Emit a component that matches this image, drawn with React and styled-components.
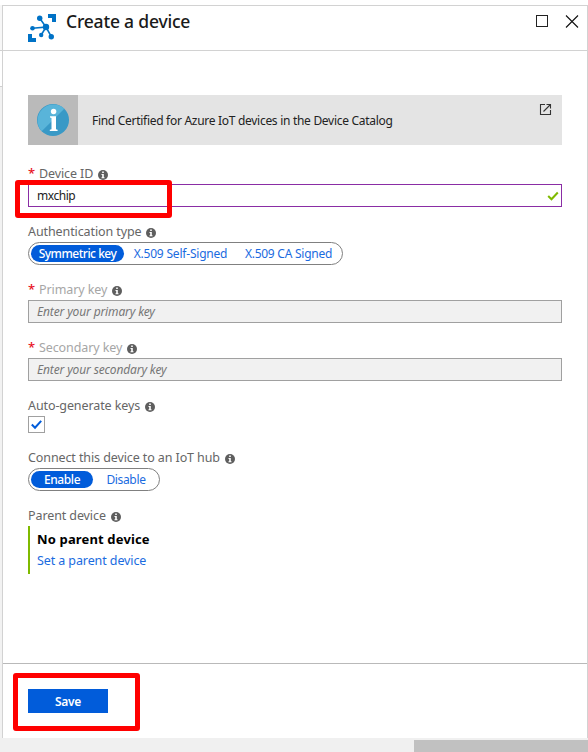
import React from "react";
import styled, { createGlobalStyle } from "styled-components";

const Global = createGlobalStyle`
  * { box-sizing: border-box; }
  body { margin: 0; background: #fff; font-family: "Noto Sans", "Open Sans", sans-serif; overflow: hidden; }
`;

const Page = styled.div`
  width: 588px;
  height: 752px;
  padding-top: 5px;
  display: grid;
  grid-template-columns: 2px 586px;
  grid-template-rows: 733px 14px;
  background: #fff;
`;
const Behind = styled.div`
  display: flex;
  flex-direction: column;
  background: #f2f2f2;
`;
const BehindRow = styled.div`
  height: ${(p) => p.$h}px;
  background: ${(p) => p.$bg};
  border-bottom: 1px solid #d0d0d0;
`;
const Blade = styled.section`
  display: flex;
  flex-direction: column;
  background: #fff;
  border: 1px solid #d2d2d2;
  border-bottom: 0;
`;
const Header = styled.header`
  height: 45px;
  display: flex;
  align-items: flex-start;
  border-bottom: 1px solid #d2d2d2;
  padding: 8px 8px 0 25px;
`;
const Title = styled.h1`
  margin: -5px auto 0 10px;
  font-size: 17.5px;
  font-weight: 500;
  line-height: 24px;
  letter-spacing: -0.2px;
  color: #1a1a1a;
  white-space: nowrap;
`;
const WindowIcon = styled.svg`
  display: block;
  margin: 1px 0 0 ${(p) => p.$gap || 0}px;
`;
const Body = styled.main`
  flex: 1;
  padding: 44px 25px 0;
`;
const Banner = styled.div`
  height: 50px;
  display: flex;
  align-items: center;
  background: #e4e4e4;
  margin-bottom: 20px;
`;
const BannerIcon = styled.div`
  width: 50px;
  height: 50px;
  display: grid;
  place-items: center;
  background: #bababa;
`;
const BannerText = styled.span`
  margin: 1px auto 0 14px;
  font-size: 12px;
  letter-spacing: -0.29px;
  color: #222;
  white-space: nowrap;
`;
const LinkIcon = styled.svg`
  align-self: flex-start;
  margin: 8px 10px 0 0;
`;
const Field = styled.div`
  position: relative;
  margin-bottom: 16px;
`;
const Label = styled.div`
  height: 19px;
  display: flex;
  align-items: flex-start;
  line-height: 17px;
  font-size: 12.5px;
  letter-spacing: -0.1px;
  color: ${(p) => (p.$muted ? "#a6a6a6" : "#666")};
  white-space: nowrap;
`;
const Star = styled.span`
  width: 11px;
  color: #e81123;
  font-size: 13px;
  font-weight: 500;
  letter-spacing: 0;
`;
const InfoSvg = styled.svg`
  margin: 5px 0 0 5px;
`;
const Input = styled.div`
  height: 23px;
  display: flex;
  align-items: center;
  justify-content: space-between;
  padding: 0 2px 0 8px;
  border: 1px solid ${(p) => (p.$disabled ? "#a0a0a0" : "#8a2da5")};
  background: ${(p) => (p.$disabled ? "#f1f1f1" : "#fff")};
  font-size: 12px;
  font-style: ${(p) => (p.$disabled ? "italic" : "normal")};
  letter-spacing: ${(p) => (p.$disabled ? -0.14 : -0.45)}px;
  color: ${(p) => (p.$disabled ? "#777" : "#222")};
`;
const Pills = styled.div`
  width: ${(p) => p.$w}px;
  height: 23px;
  display: flex;
  padding: 2px;
  border: 1px solid #808080;
  border-radius: 12px;
`;
const Pill = styled.div`
  flex: none;
  width: ${(p) => p.$w}px;
  height: 17px;
  border-radius: 9px;
  background: ${(p) => (p.$on ? "#015cda" : "transparent")};
  color: ${(p) => (p.$on ? "#fff" : "#1a6be0")};
  font-size: 12px;
  font-weight: ${(p) => (p.$on ? 500 : 400)};
  line-height: 18px;
  letter-spacing: ${(p) => p.$ls || 0}px;
  text-align: center;
  white-space: nowrap;
`;
const Checkbox = styled.div`
  width: 17px;
  height: 17px;
  display: grid;
  place-items: center;
  border: 1px solid #a0a0a0;
`;
const Parent = styled.div`
  height: 48px;
  border-left: 2px solid #7fba00;
  padding: 3px 0 0 7px;
  line-height: 21px;
`;
const ParentName = styled.div`
  font-size: 13px;
  font-weight: 700;
  color: #000;
  letter-spacing: 0.15px;
`;
const ParentLink = styled.a`
  display: block;
  font-size: 12.5px;
  color: #1a6be0;
  letter-spacing: -0.1px;
`;
const Footer = styled.footer`
  height: 75px;
  border-top: 1px solid #b9b9b9;
  padding: 25px 25px 0;
  position: relative;
`;
const Save = styled.button`
  display: block;
  width: 80px;
  height: 24px;
  padding: 1px 0 0;
  border: 0;
  background: #015cda;
  color: #fff;
  font: 600 12px/23px "Noto Sans", sans-serif;
  letter-spacing: -0.3px;
`;
const Highlight = styled.div`
  position: absolute;
  left: ${(p) => p.$x}px;
  top: ${(p) => p.$y}px;
  width: ${(p) => p.$w}px;
  height: ${(p) => p.$h}px;
  border: 5px solid #f00;
  border-radius: 3px;
`;
const ScrollTrack = styled.div`
  grid-column: 1 / 3;
  padding: 2px 0 0 414px;
  background: #f0f0f0;
`;
const ScrollThumb = styled.div`
  height: 12px;
  background: #c1c1c1;
`;

const Info = () => (
  <InfoSvg width="10" height="10" viewBox="0 0 10 10">
    <circle cx="5" cy="5" r="5" fill="#5e5e5e" />
    <path d="M4.200 1.500h1.600v1.500H4.200zM3.500 4H5.800v3.300h.7v1H3.500v-1h.7V5h-.7z" fill="#fff" />
  </InfoSvg>
);

const HubIcon = () => (
  <svg width="28" height="28" viewBox="0 0 28 28">
    <g fill="#0072c6">
      <path d="M20 0h8v8h-4V4h-4zM0 20h4v4h4v4H0z" />
      <circle cx="11.7" cy="4.2" r="2.7" />
      <circle cx="4.5" cy="14.3" r="2.3" />
      <circle cx="18" cy="13" r="3.2" />
      <circle cx="13.2" cy="21" r="2.2" />
      <circle cx="23.3" cy="22.7" r="2.7" />
    </g>
    <path d="M11.7 4.2L18 13L4.5 14.3M13.2 21L18 13L23.3 22.7" fill="none" stroke="#0072c6" strokeWidth="1.6" />
  </svg>
);

export default function App() {
  return (
    <>
      <Global />
      <Page>
        <Behind>
          <BehindRow $h={46} $bg="#f7f7f7" />
          <BehindRow $h={36} $bg="#fff" />
        </Behind>
        <Blade>
          <Header>
            <HubIcon />
            <Title>Create a device</Title>
            <WindowIcon width="12" height="12">
              <rect x="0.5" y="0.5" width="11" height="11" fill="none" stroke="#222" />
            </WindowIcon>
            <WindowIcon width="14" height="14" $gap={17}>
              <path d="M1 0.5L13 12.5M13 0.5L1 12.5" stroke="#111" strokeWidth="1.1" />
            </WindowIcon>
          </Header>
          <Body>
            <Banner>
              <BannerIcon>
                <svg width="32" height="32" viewBox="0 0 32 32">
                  <circle cx="16" cy="16" r="16" fill="#3999c6" />
                  <path d="M4.7 27.3A16 16 0 0 1 27.3 4.7Z" fill="#59b4d9" />
                  <circle cx="16.6" cy="7.5" r="2.7" fill="#fff" />
                  <path d="M13 12.2h6v13l1.6.5v1.2h-7.800v-1.200l1.700-.5V13.900l-1.500-.5z" fill="#fff" />
                </svg>
              </BannerIcon>
              <BannerText>Find Certified for Azure IoT devices in the Device Catalog</BannerText>
              <LinkIcon width="13" height="13" viewBox="0 0 13 13" fill="none" stroke="#333" strokeWidth="1.100">
                <path d="M6 1.500H1.500V11.500H11.500V7M7.500 1.500H11.500V5.500M11.500 1.500L4.500 8.500" />
              </LinkIcon>
            </Banner>

            <Field>
              <Label><Star>*</Star>Device ID<Info /></Label>
              <Input>
                mxchip
                <svg width="12" height="10" viewBox="0 0 12 10">
                  <path d="M1.200 5L4.500 8.300L10.800 1.500" fill="none" stroke="#7fba00" strokeWidth="2" />
                </svg>
              </Input>
              <Highlight $x={-13} $y={15} $w={157} $h={38} />
            </Field>

            <Field>
              <Label>Authentication type<Info /></Label>
              <Pills $w={315}>
                <Pill $on $w={93} $ls={-0.5}>Symmetric key</Pill>
                <Pill $w={113} $ls={-0.2}>X.509 Self-Signed</Pill>
                <Pill $w={103} $ls={-0.25}>X.509 CA Signed</Pill>
              </Pills>
            </Field>

            <Field>
              <Label $muted><Star>*</Star>Primary key<Info /></Label>
              <Input $disabled>Enter your primary key</Input>
            </Field>

            <Field>
              <Label $muted><Star>*</Star>Secondary key<Info /></Label>
              <Input $disabled>Enter your secondary key</Input>
            </Field>

            <Field>
              <Label>Auto-generate keys<Info /></Label>
              <Checkbox>
                <svg width="11" height="11" viewBox="0 0 11 11">
                  <path d="M0.800 5.500L4 8.700L10.200 1.800" fill="none" stroke="#015cda" strokeWidth="2" />
                </svg>
              </Checkbox>
            </Field>

            <Field>
              <Label>Connect this device to an IoT hub<Info /></Label>
              <Pills $w={132}>
                <Pill $on $w={62} $ls={-0.4}>Enable</Pill>
                <Pill $w={66} $ls={-0.35}>Disable</Pill>
              </Pills>
            </Field>

            <Field>
              <Label>Parent device<Info /></Label>
              <Parent>
                <ParentName>No parent device</ParentName>
                <ParentLink>Set a parent device</ParentLink>
              </Parent>
            </Field>
          </Body>
          <Footer>
            <Save>Save</Save>
            <Highlight $x={10} $y={9} $w={127} $h={58} />
          </Footer>
        </Blade>
        <ScrollTrack>
          <ScrollThumb />
        </ScrollTrack>
      </Page>
    </>
  );
}
